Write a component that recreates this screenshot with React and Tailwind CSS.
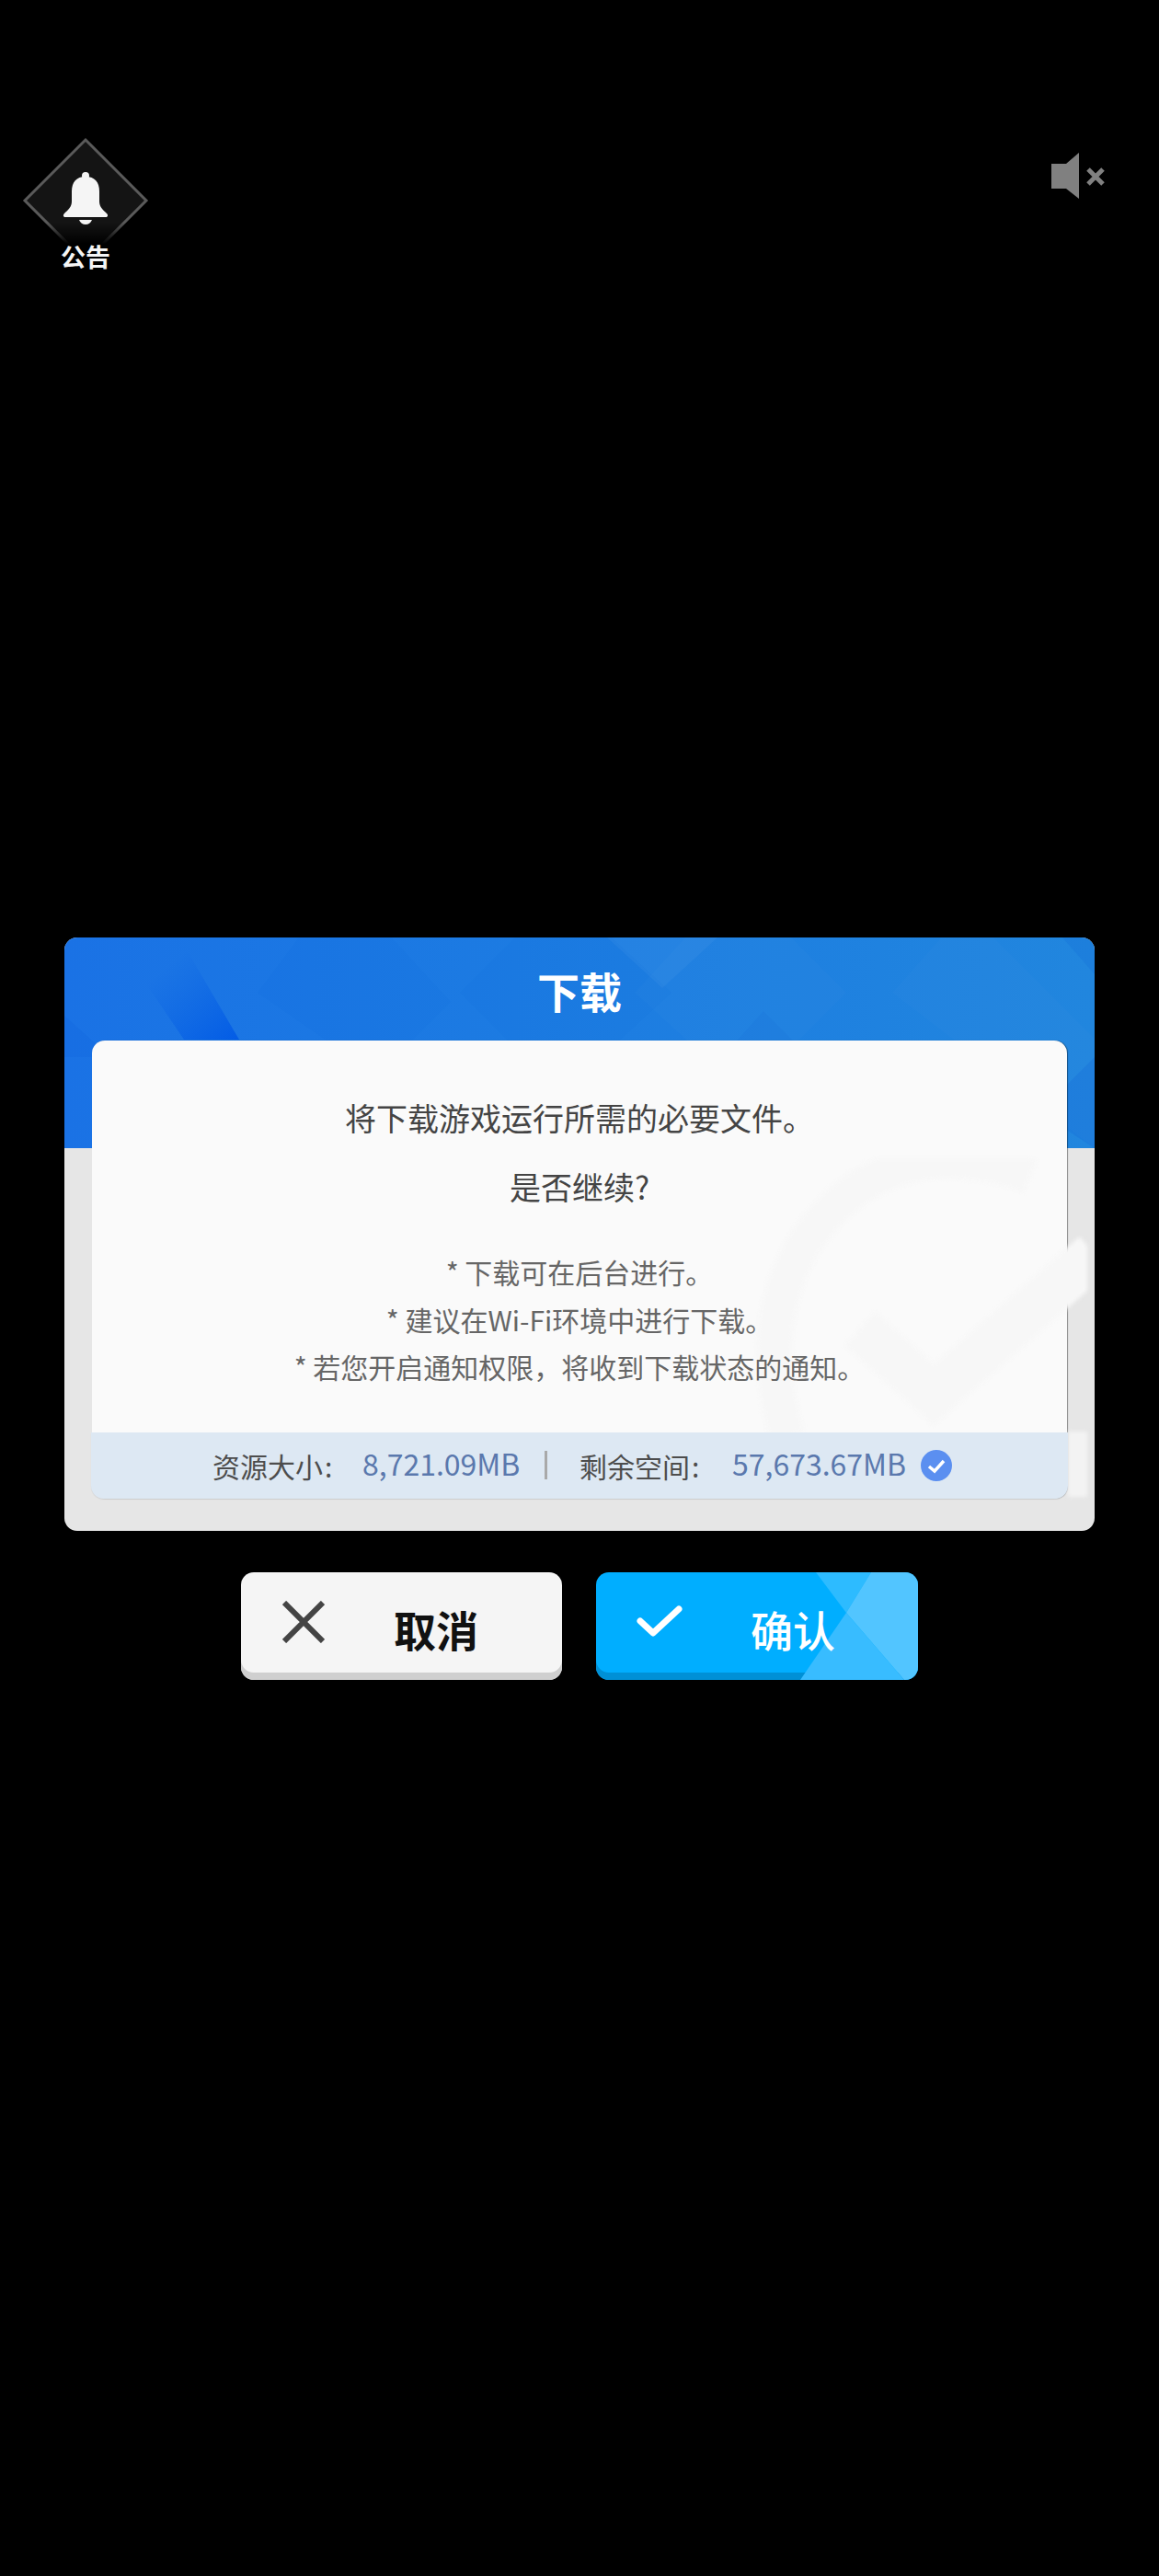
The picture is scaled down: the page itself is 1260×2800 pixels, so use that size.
function BellBadge() {
  return (
    <svg width="140" height="116" viewBox="0 0 140 116" className="block">
      <defs>
        <linearGradient id="fade" x1="0" y1="0" x2="0" y2="1">
          <stop offset="0.8" stopColor="#fff" />
          <stop offset="1" stopColor="#000" />
        </linearGradient>
        <mask id="fadeMask">
          <rect x="0" y="0" width="140" height="116" fill="url(#fade)" />
        </mask>
      </defs>
      <polygon
        points="70,3 136,69 70,135 4,69"
        fill="#141414"
        stroke="#5a5a5a"
        strokeWidth="3"
        mask="url(#fadeMask)"
      />
      <circle cx="70" cy="42" r="4" fill="#f5f5f5" />
      <path
        d="M70 43c-10 0-15 6-15 16v11c0 6-4 9-8 13-2 2-1 4 1 4h44c2 0 3-2 1-4-4-4-8-7-8-13V59c0-10-5-16-15-16z"
        fill="#f5f5f5"
      />
      <path d="M63 90h14c-1 3-4 5-7 5s-6-2-7-5z" fill="#f5f5f5" />
    </svg>
  )
}

function MutedIcon() {
  return (
    <svg width="60" height="52" viewBox="0 0 60 52" className="block">
      <path d="M0 12h16L30 0v50L16 39H0z" fill="#808080" />
      <path d="M40 18l16 16M56 18L40 34" stroke="#808080" strokeWidth="5" />
    </svg>
  )
}

function HeaderPattern() {
  return (
    <svg
      className="absolute left-0 top-0"
      width="1120"
      height="229"
      viewBox="0 0 1120 229"
    >
      <defs>
        <linearGradient id="band" x1="0" y1="0" x2="1" y2="1">
          <stop offset="0.35" stopColor="#0a62e4" stopOpacity="0" />
          <stop offset="1" stopColor="#0059e6" stopOpacity="0.9" />
        </linearGradient>
      </defs>
      <polygon points="55,0 125,0 190,111 130,111" fill="url(#band)" />
      <polygon points="0,85 50,130 0,130" fill="#0f5fdc" opacity="0.2" />
      <polygon points="300,-60 420,70 340,150 210,60" fill="#0e62d8" opacity="0.08" />
      <polygon points="540,-50 660,60 540,170 430,60" fill="#0e62d8" opacity="0.08" />
      <polygon points="730,-60 850,60 740,170 620,60" fill="#ffffff" opacity="0.015" />
      <polygon points="590,0 710,0 650,55" fill="#ffffff" opacity="0.04" />
      <polygon points="760,80 850,170 680,170" fill="#0e62d8" opacity="0.12" />
      <polygon points="980,-30 1120,110 1120,229 900,60" fill="#ffffff" opacity="0.015" />
      <polygon points="1085,0 1120,0 1120,40" fill="#0e62d8" opacity="0.2" />
      <polygon points="1120,130 1060,190 1120,229" fill="#0e62d8" opacity="0.25" />
    </svg>
  )
}

function Watermark() {
  return (
    <svg
      className="absolute left-[750px] top-[240px] pointer-events-none blur-[2px]"
      width="362"
      height="376"
      viewBox="0 0 362 376"
    >
      <path
        d="M300 20C270 8 240 3 210 3 110 3 22 90 22 210c0 30 4 60 14 92"
        fill="none"
        stroke="#f7f7f7"
        strokeWidth="38"
      />
      <path d="M115 185l80 72 175-153" fill="none" stroke="#f7f7f7" strokeWidth="50" />
      <rect x="341" y="297" width="21" height="71" fill="#f3f3f3" />
    </svg>
  )
}

function InfoStrip() {
  return (
    <div className="relative z-20 -mx-px h-[72px] rounded-b-[14px] bg-[#dde8f3] flex items-center pl-[132px] text-[30px] leading-[40px] text-[#4d4d4d] shadow-[0_1px_1px_rgba(0,0,0,0.08)]">
      <span className="w-[163px]">资源大小<span className="ml-[2px]">:</span></span>
      <span className="w-[172px] mb-[6px] text-[32px] text-[#5a78ad]">8,721.09MB</span>
      <span className="ml-[26px] h-[31px] w-[3px] bg-[#a9a9a9]" />
      <span className="ml-[35px] w-[166px]">剩余空间<span className="ml-[2px]">:</span></span>
      <span className="w-[189px] mb-[6px] text-[32px] text-[#5a78ad]">57,673.67MB</span>
      <svg width="34" height="34" viewBox="0 0 34 34" className="ml-[16px]">
        <circle cx="17" cy="17" r="17" fill="#5b8ff0" />
        <path d="M9 18l6 5 10-11" fill="none" stroke="#fff" strokeWidth="3.5" />
      </svg>
    </div>
  )
}

function DownloadDialog() {
  return (
    <div className="relative mx-[70px] w-[1120px] rounded-[14px] bg-[#e6e6e6] pb-[35px] overflow-hidden">
      <div className="relative h-[229px] bg-gradient-to-r from-[#1a72e5] to-[#2186de] overflow-hidden">
        <HeaderPattern />
        <h1 className="relative pt-[32px] text-center text-[46px] leading-[50px] font-bold text-white">
          下载
        </h1>
      </div>

      <div className="relative mx-[30px] -mt-[117px] rounded-[14px] bg-[#fafafa] shadow-[1px_0_1px_rgba(0,0,0,0.4)]">
        <div className="relative z-20 pt-[59px] pb-[45px] text-center">
          <p className="text-[34px] leading-[50px] text-[#444444]">将下载游戏运行所需的必要文件。</p>
          <p className="mt-[25px] text-[34px] leading-[50px] text-[#444444]">是否继续?</p>
          <div className="mt-[42px] text-[30px] leading-[51.5px] text-[#666666]">
            <p>* 下载可在后台进行。</p>
            <p>* 建议在Wi-Fi环境中进行下载。</p>
            <p>* 若您开启通知权限{'\uFF0C'}将收到下载状态的通知。</p>
          </div>
        </div>
        <InfoStrip />
      </div>

      <Watermark />
    </div>
  )
}

function App() {
  return (
    <div className="w-[1260px] h-[2800px] bg-black font-['Noto_Sans_CJK_SC','Noto_Sans',sans-serif]">
      <div className="h-[1019px] pt-[149px] pl-[23px] pr-[57px] flex justify-between items-start">
        <div className="flex flex-col items-center">
          <BellBadge />
          <span className="-mt-[1px] text-[27px] leading-[30px] font-bold text-[#f5f5f5]">公告</span>
        </div>
        <div className="pt-[17px]">
          <MutedIcon />
        </div>
      </div>

      <DownloadDialog />

      <div className="mt-[45px] flex justify-center gap-[37px]">
        <button className="w-[349px] h-[117px] rounded-[14px] bg-[#f5f5f5] shadow-[inset_0_-8px_0_#cfcfcf] flex items-start pl-[45px] pt-[31px]">
          <svg width="46" height="46" viewBox="0 0 46 46" className="block">
            <path d="M2 2l42 42M44 2L2 44" stroke="#444444" strokeWidth="6" />
          </svg>
          <span className="ml-[75px] mt-[5px] text-[46px] leading-[50px] font-bold text-[#111111]">取消</span>
        </button>

        <button className="relative w-[350px] h-[117px] rounded-[14px] bg-[#00aeff] shadow-[inset_0_-8px_0_#0090d6] overflow-hidden flex items-start pl-[44px] pt-[36px]">
          <svg
            className="absolute left-0 top-0"
            width="350"
            height="117"
            viewBox="0 0 350 117"
          >
            <polygon points="239,0 299,0 272,44" fill="#2dbbff" />
            <polygon points="299,0 350,0 350,117 335,117 272,44" fill="#52c5ff" />
            <polygon points="272,44 335,117 222,117" fill="#38bcff" />
          </svg>
          <svg width="50" height="36" viewBox="0 0 50 36" className="relative block">
            <path
              d="M4 17l14 13L46 4"
              fill="none"
              stroke="#ffffff"
              strokeWidth="7"
              strokeLinecap="round"
              strokeLinejoin="round"
            />
          </svg>
          <span className="relative ml-[74px] text-[46px] leading-[50px] font-medium text-white">确认</span>
        </button>
      </div>
    </div>
  )
}

export default App
